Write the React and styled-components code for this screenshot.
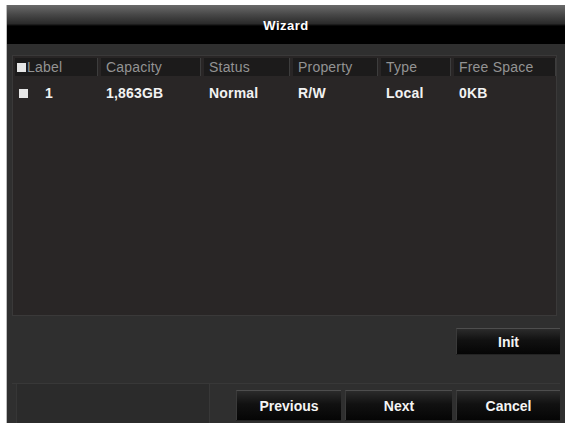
import React from "react";
import styled, { createGlobalStyle } from "styled-components";

const disks = [
    ["1", "1,863GB", "Normal", "R/W", "Local", "0KB"]
]

const columns = [
    ["Label", 83],
    ["Capacity", 100],
    ["Status", 86],
    ["Property", 85],
    ["Type", 70],
    ["Free Space", 102]
]

const GlobalStyle = createGlobalStyle`
    html, body {
        margin: 0;
        background: #ffffff;
    }
    body {
        font-family: "Liberation Sans", Arial, sans-serif;
    }
`

const Page = styled.div`
    width: 565px;
    height: 423px;
    padding: 5px 0 0 7px;
    box-sizing: border-box;
    overflow: hidden;
`

const Window = styled.div`
    width: 558px;
    height: 418px;
    background: #2f2f2f;
    display: flex;
    flex-direction: column;
    box-shadow: -1px 0 0 #bdbdbd;
`

const TitleBar = styled.div`
    height: 39px;
    flex-shrink: 0;
    background: linear-gradient(to bottom, #6a6a6a 0%, #474747 25%, #2a2a2a 48%, #000 54%, #000 100%);
    display: flex;
    align-items: center;
    justify-content: center;
    color: #fff;
    font-size: 13px;
    letter-spacing: 0.5px;
    font-weight: bold;
    padding-top: 2px;
    box-sizing: border-box;
`

const Body = styled.div`
    flex: 1;
    display: flex;
    flex-direction: column;
    padding: 11px 8px 0 5px;
`

const Panel = styled.div`
    height: 261px;
    background: #292626;
    border: 1px solid #3a3939;
    box-sizing: border-box;
    padding: 2px 2px 0 2px;
`

const Row = styled.div`
    display: flex;
    gap: 3px;
    height: ${p => p.$head ? "18px" : "24px"};
    margin-top: ${p => p.$head ? "0" : "5px"};
`

const Cell = styled.div`
    width: ${p => p.$w}px;
    flex-shrink: 0;
    display: flex;
    align-items: center;
    box-sizing: border-box;
    padding-left: ${p => p.$pad || 5}px;
    font-size: 14px;
    letter-spacing: 0.2px;
    white-space: nowrap;
    overflow: hidden;
    color: ${p => p.$head ? "#939393" : "#f2f2f2"};
    font-weight: ${p => p.$head ? "normal" : "bold"};
    background: ${p => p.$head ? "#1c1b1b" : "transparent"};
    border-right: ${p => p.$head ? "1px solid #3d3d3d" : "none"};
`

const Check = styled.span`
    width: 9px;
    height: 9px;
    background: #e6e6e6;
    margin-right: ${p => p.$gap}px;
    flex-shrink: 0;
`

const InitArea = styled.div`
    height: 67px;
    display: flex;
    justify-content: flex-end;
    align-items: flex-start;
    padding-top: 12px;
    box-sizing: border-box;
    margin-right: -3px;
`

const Button = styled.button`
    width: ${p => p.$w || 104}px;
    height: ${p => p.$h || 26}px;
    border: none;
    border-top: 1px solid #4e4e4e;
    border-left: 1px solid #3a3a3a;
    background: linear-gradient(to bottom, #2b2b2b 0%, #111 45%, #050505 100%);
    color: #f4f4f4;
    font-family: "Liberation Sans", Arial, sans-serif;
    font-size: 14px;
    font-weight: bold;
    padding: 0;
    box-shadow: 0 1px 0 #232323;
`

const Footer = styled.div`
    flex: 1;
    display: flex;
    align-items: flex-start;
    margin-right: -3px;
    border-top: 1px solid #383838;
`

const BlankBox = styled.div`
    width: 192px;
    height: 100%;
    background: #2b2b2b;
    border-right: 1px solid #383838;
    border-left: 1px solid #363636;
    margin-left: 4px;
`

const Buttons = styled.div`
    margin-left: auto;
    display: flex;
    gap: 4px;
    padding-top: 6px;
`

const App = () => {
    return(
        <Page>
            <GlobalStyle/>
            <Window>
                <TitleBar>Wizard</TitleBar>
                <Body>
                    <Panel>
                        <Row $head>
                            {columns.map(([name, w], i) => (
                                <Cell key={name} $head $w={w} $pad={i === 0 ? 2 : 5}>
                                    {i === 0 && <Check $gap={1}/>}
                                    {name}
                                </Cell>
                            ))}
                        </Row>
                        {disks.map(d => (
                            <Row key={d[0]}>
                                {d.map((v, i) => (
                                    <Cell key={i} $w={columns[i][1]} $pad={i === 0 ? 4 : 5}>
                                        {i === 0 && <Check $gap={17}/>}
                                        {v}
                                    </Cell>
                                ))}
                            </Row>
                        ))}
                    </Panel>
                    <InitArea>
                        <Button $w={104}>Init</Button>
                    </InitArea>
                    <Footer>
                        <BlankBox/>
                        <Buttons>
                            <Button $w={105} $h={30}>Previous</Button>
                            <Button $w={107} $h={30}>Next</Button>
                            <Button $w={104} $h={30}>Cancel</Button>
                        </Buttons>
                    </Footer>
                </Body>
            </Window>
        </Page>
    )
}

export default App
